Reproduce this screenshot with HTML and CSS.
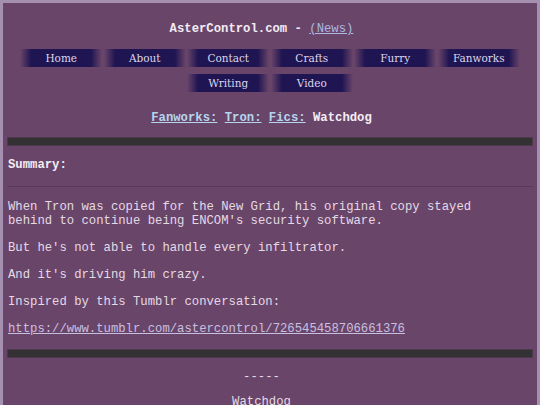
FILE: index.html
```html
<!DOCTYPE html>
<html>
<head>
<meta charset="utf-8">
<link rel="stylesheet" href="styles.css">
</head>
<body>
<div class="page">
  <div class="site-title">AsterControl.com - <a class="news" href="#">(News)</a></div>
  <nav class="nav">
    <a class="btn" href="#">Home</a>
    <a class="btn" href="#">About</a>
    <a class="btn" href="#">Contact</a>
    <a class="btn" href="#">Crafts</a>
    <a class="btn" href="#">Furry</a>
    <a class="btn" href="#">Fanworks</a>
    <a class="btn" href="#">Writing</a>
    <a class="btn" href="#">Video</a>
  </nav>
  <div class="crumbs"><a href="#">Fanworks:</a> <a href="#">Tron:</a> <a href="#">Fics:</a> Watchdog</div>
  <div class="bar"></div>
  <div class="summary-head">Summary:</div>
  <div class="thin"></div>
  <div class="text">
    <p>When Tron was copied for the New Grid, his original copy stayed<br>behind to continue being ENCOM's security software.</p>
    <p>But he's not able to handle every infiltrator.</p>
    <p>And it's driving him crazy.</p>
    <p>Inspired by this Tumblr conversation:</p>
    <p><a class="link" href="#">https://www.tumblr.com/astercontrol/726545458706661376</a></p>
  </div>
  <div class="bar"></div>
  <div class="story">
    <p>-----</p>
    <p>Watchdog</p>
  </div>
</div>
</body>
</html>
```
FILE: styles.css
```css
html, body {
  margin: 0;
  padding: 0;
}
body {
  background: #a690b2;
  font-family: "Liberation Mono", "Courier New", monospace;
  font-size: 12.25px;
  color: #e4dae4;
  overflow: hidden;
}
.page {
  margin: 3px 3px 0 3px;
  background: #6a456a;
  padding: 0 4px;
  min-height: 420px;
}
.site-title {
  text-align: center;
  font-weight: bold;
  color: #f2ecf2;
  padding: 19px 17px 0 0;
  line-height: 14px;
}
.news {
  font-weight: normal;
  color: #aab8e2;
  text-decoration: underline;
}
.nav {
  display: flex;
  flex-wrap: wrap;
  justify-content: center;
  gap: 7px 1.5px;
  padding: 13px 0 0 0;
  width: 502px;
  margin: 0 auto;
}
.btn {
  display: block;
  width: 82px;
  height: 18px;
  line-height: 18px;
  text-align: center;
  font-family: "DejaVu Serif", "Liberation Serif", serif;
  font-size: 10.5px;
  color: #ddd6ea;
  text-decoration: none;
  background: linear-gradient(to right, rgba(31,21,82,0) 0, #1f1552 11px, #1f1552 71px, rgba(31,21,82,0) 82px);
}
.crumbs {
  text-align: center;
  font-weight: bold;
  color: #f4eef4;
  padding: 19px 17px 0 0;
  line-height: 14px;
}
.crumbs a {
  color: #b4d6ec;
  text-decoration: underline;
}
.bar {
  height: 7px;
  background: #333133;
  border: 1px solid #4c3a4c;
  margin-top: 12px;
}
.summary-head {
  font-weight: bold;
  color: #f2ecf2;
  padding: 12px 0 0 1px;
  line-height: 14px;
}
.thin {
  height: 1px;
  background: #5a3a5a;
  margin-top: 14px;
}
.text {
  padding: 0 0 0 1px;
}
.text p {
  margin: 12px 0 13px 0;
  line-height: 14px;
}
.text p:first-child {
  margin-top: 13px;
}
.link {
  color: #c8c0e0;
  text-decoration: underline;
}
.story {
  text-align: center;
  padding-right: 17px;
}
.story p {
  margin: 12px 0 0 0;
  line-height: 14px;
}
.story p + p {
  margin-top: 11px;
}
```
